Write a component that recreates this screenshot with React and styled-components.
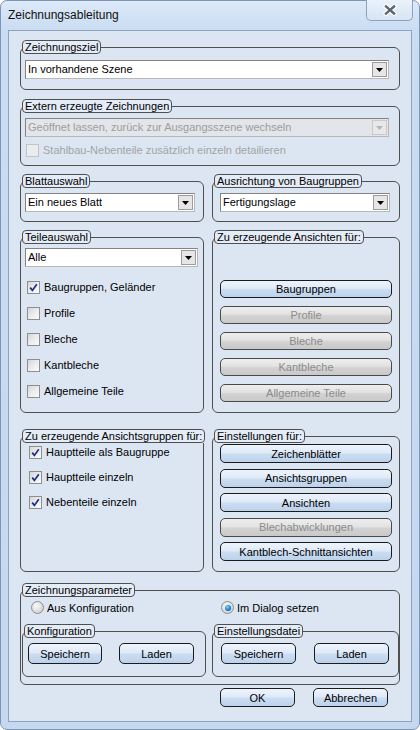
import React from 'react'
import styled, { createGlobalStyle } from 'styled-components'

const GlobalStyle = createGlobalStyle`
  html, body {
    margin: 0;
    padding: 0;
    background: #ffffff;
  }
  body {
    font-family: "Liberation Sans", Arial, sans-serif;
    font-size: 11px;
    color: #000;
  }
`

const Window = styled.div`
  box-sizing: border-box;
  width: 420px;
  height: 730px;
  display: flex;
  flex-direction: column;
  border: 1px solid #7d96b6;
  border-radius: 7px;
  background: linear-gradient(to bottom, #dce9f8 0px, #cadcf2 30px, #c5d8ef 100%);
  padding: 0 7px 7px 7px;
`

const TitleBar = styled.div`
  height: 29px;
  display: flex;
  justify-content: space-between;
  align-items: flex-start;
`

const Title = styled.div`
  font-size: 12px;
  line-height: 15px;
  padding-top: 7px;
  color: #101010;
`

const CloseButton = styled.div`
  box-sizing: border-box;
  width: 47px;
  height: 21px;
  margin-top: -1px;
  margin-right: -1px;
  display: flex;
  align-items: center;
  justify-content: center;
  border: 1px solid #8da3bf;
  border-top: none;
  border-radius: 0 0 5px 5px;
  background: linear-gradient(to bottom, #eaf2fb, #d7e4f4);
`

const Client = styled.div`
  flex: 1;
  box-sizing: border-box;
  border: 1px solid #8ea3bd;
  background: #dce6f3;
  padding: 9px 11px 0 11px;
  display: flex;
  flex-direction: column;
`

const Group = styled.fieldset`
  margin: ${p => p.$mt || 0}px 0 0 0;
  padding: 0;
  min-width: 0;
  border: 1px solid #4f4f4f;
  border-radius: 6px;
`

const Legend = styled.legend`
  margin-left: 1px;
  padding: 0 2px;
  border: 1px solid #4f4f4f;
  border-radius: 4px;
  background: #e4ecf7;
  font-size: 11px;
  line-height: 12px;
  white-space: nowrap;
`

const GroupBody = styled.div`
  display: flex;
  flex-direction: column;
  padding: ${p => p.$pad || '5px 8px 8px 4px'};
  gap: ${p => p.$gap || 0}px;
`

const Columns = styled.div`
  display: grid;
  grid-template-columns: 184px 188px;
  column-gap: 8px;
  margin-top: ${p => p.$mt || 0}px;
`

const SubColumns = styled.div`
  display: grid;
  grid-template-columns: 184px 1fr;
  column-gap: 6px;
  margin-top: 9px;
`

const SelectBox = styled.div`
  box-sizing: border-box;
  height: 19px;
  display: flex;
  border: 1px solid #838383;
  border-right-color: #b8b8b8;
  border-bottom-color: #b8b8b8;
  background: ${p => (p.$disabled ? '#e2e5e9' : '#ffffff')};
  color: ${p => (p.$disabled ? '#9d9d9d' : '#000')};
`

const SelectValue = styled.span`
  flex: 1;
  padding-left: 2px;
  line-height: 17px;
  white-space: nowrap;
  overflow: hidden;
`

const SelectArrow = styled.span`
  box-sizing: border-box;
  width: 15px;
  margin: 1px;
  display: flex;
  align-items: center;
  justify-content: center;
  border: 1px solid ${p => (p.$disabled ? '#c9c9c9' : '#9c9c9c')};
  background: ${p => (p.$disabled ? '#e8e8e8' : '#e6e6e6')};
`

const CheckRow = styled.label`
  display: flex;
  align-items: center;
  gap: 4px;
  height: 16px;
  padding-left: ${p => p.$indent || 0}px;
  color: ${p => (p.$disabled ? '#a3a3a3' : '#000')};
  white-space: nowrap;
`

const Box = styled.span`
  box-sizing: border-box;
  width: 13px;
  height: 13px;
  flex: none;
  display: flex;
  align-items: center;
  justify-content: center;
  border: 1px solid ${p => (p.$disabled ? '#c2c4c6' : '#8e8f8f')};
  background: ${p =>
    p.$disabled
      ? '#ebecee'
      : 'linear-gradient(135deg, #d6d6d6 0%, #ececec 50%, #fbfbfb 100%)'};
`

const CheckList = styled.div`
  display: flex;
  flex-direction: column;
  gap: ${p => p.$gap}px;
  margin-top: ${p => p.$mt || 0}px;
`

const Button = styled.div`
  box-sizing: border-box;
  height: ${p => p.$h || 19}px;
  width: ${p => (p.$w ? `${p.$w}px` : 'auto')};
  flex: none;
  display: flex;
  align-items: center;
  justify-content: center;
  border: 1px solid ${p => (p.$disabled ? '#4a4a4a' : '#1b1b1b')};
  border-radius: 5px;
  color: ${p => (p.$disabled ? '#8b8b8b' : '#000')};
  background: ${p =>
    p.$disabled
      ? 'linear-gradient(to bottom, #eeeeee 0%, #e2e2e2 45%, #d2d2d2 55%, #c9c9c9 100%)'
      : 'linear-gradient(to bottom, #eef4fc 0%, #dfeaf8 45%, #cadcf1 55%, #bcd2eb 100%)'};
  white-space: nowrap;
`

const ButtonStack = styled.div`
  display: flex;
  flex-direction: column;
  gap: ${p => p.$gap}px;
`

const ButtonRow = styled.div`
  display: flex;
  gap: ${p => p.$gap}px;
  padding-left: ${p => p.$indent || 0}px;
`

const RadioRow = styled.div`
  display: grid;
  grid-template-columns: 190px 1fr;
  padding-left: 9px;
`

const RadioLabel = styled.label`
  display: flex;
  align-items: center;
  gap: 3px;
  height: 15px;
  white-space: nowrap;
`

const RadioDot = styled.span`
  box-sizing: border-box;
  width: 13px;
  height: 13px;
  border-radius: 50%;
  flex: none;
  display: flex;
  align-items: center;
  justify-content: center;
  border: 1px solid #8d8f91;
  background: radial-gradient(circle at 40% 35%, #fbfbfb 0%, #dadada 60%, #c4c4c4 100%);

  &::after {
    content: '';
    display: ${p => (p.$checked ? 'block' : 'none')};
    width: 6px;
    height: 6px;
    border-radius: 50%;
    background: radial-gradient(circle at 40% 35%, #7fd8ff 0%, #1f7fd0 55%, #0d3f8a 100%);
  }
`

const Footer = styled.div`
  display: flex;
  justify-content: flex-end;
  gap: 18px;
  margin-top: 3px;
  padding-right: 12px;
`

const Arrow = ({ disabled }) => (
  <svg width="7" height="4" viewBox="0 0 7 4">
    <polygon points="0,0 7,0 3.5,4" fill={disabled ? '#b5b5b5' : '#000'} />
  </svg>
)

const Select = ({ value, disabled }) => (
  <SelectBox $disabled={disabled}>
    <SelectValue>{value}</SelectValue>
    <SelectArrow $disabled={disabled}>
      <Arrow disabled={disabled} />
    </SelectArrow>
  </SelectBox>
)

const Check = ({ label, checked, disabled, indent }) => (
  <CheckRow $disabled={disabled} $indent={indent}>
    <Box $disabled={disabled}>
      {checked && (
        <svg width="9" height="9" viewBox="0 0 9 9">
          <path d="M1.2 4.6 L3.4 7.4 L7.8 1.2" fill="none" stroke="#1d2b8c" strokeWidth="1.7" />
        </svg>
      )}
    </Box>
    {label}
  </CheckRow>
)

const Radio = ({ label, checked }) => (
  <RadioLabel>
    <RadioDot $checked={checked} />
    {label}
  </RadioLabel>
)

const Section = ({ title, pad, gap, mt, children }) => (
  <Group $mt={mt}>
    <Legend>{title}</Legend>
    <GroupBody $pad={pad} $gap={gap}>
      {children}
    </GroupBody>
  </Group>
)

const CloseGlyph = () => (
  <svg width="14" height="12" viewBox="0 0 14 12">
    <path d="M3 2.5 L11 9.5 M11 2.5 L3 9.5" stroke="#ffffff" strokeWidth="4.6" strokeLinecap="square" />
    <path d="M3 2.5 L11 9.5 M11 2.5 L3 9.5" stroke="#5e6670" strokeWidth="2.4" strokeLinecap="square" />
  </svg>
)

export default function App() {
  return (
    <>
      <GlobalStyle />
      <Window>
        <TitleBar>
          <Title>Zeichnungsableitung</Title>
          <CloseButton>
            <CloseGlyph />
          </CloseButton>
        </TitleBar>
        <Client>
          <Section title="Zeichnungsziel" pad="6px 10px 10px 4px">
            <Select value="In vorhandene Szene" />
          </Section>

          <Section title="Extern erzeugte Zeichnungen" mt={9} pad="5px 10px 7px 4px" gap={5}>
            <Select value="Geöffnet lassen, zurück zur Ausgangsszene wechseln" disabled />
            <Check label="Stahlbau-Nebenteile zusätzlich einzeln detailieren" disabled indent={1} />
          </Section>

          <Columns $mt={8}>
            <Section title="Blattauswahl" pad="5px 8px 9px 4px">
              <Select value="Ein neues Blatt" />
            </Section>
            <Section title="Ausrichtung von Baugruppen" pad="5px 9px 9px 7px">
              <Select value="Fertigungslage" />
            </Section>
          </Columns>

          <Columns $mt={8}>
            <Section title="Teileauswahl" pad="4px 5px 12px 4px">
              <Select value="Alle" />
              <CheckList $gap={10} $mt={12}>
                <Check label="Baugruppen, Geländer" checked indent={2} />
                <Check label="Profile" indent={2} />
                <Check label="Bleche" indent={2} />
                <Check label="Kantbleche" indent={2} />
                <Check label="Allgemeine Teile" indent={2} />
              </CheckList>
            </Section>
            <Section title="Zu erzeugende Ansichten für:" pad="36px 7px 10px 7px">
              <ButtonStack $gap={8}>
                <Button $h={18}>Baugruppen</Button>
                <Button $h={18} $disabled>Profile</Button>
                <Button $h={18} $disabled>Bleche</Button>
                <Button $h={18} $disabled>Kantbleche</Button>
                <Button $h={18} $disabled>Allgemeine Teile</Button>
              </ButtonStack>
            </Section>
          </Columns>

          <Columns $mt={16}>
            <Section title="Zu erzeugende Ansichtsgruppen für:" pad="1px 5px 10px 8px">
              <CheckList $gap={9}>
                <Check label="Hauptteile als Baugruppe" checked />
                <Check label="Hauptteile einzeln" checked />
                <Check label="Nebenteile einzeln" checked />
              </CheckList>
            </Section>
            <Section title="Einstellungen für:" pad="1px 7px 10px 7px">
              <ButtonStack $gap={5.5}>
                <Button>Zeichenblätter</Button>
                <Button>Ansichtsgruppen</Button>
                <Button>Ansichten</Button>
                <Button $disabled>Blechabwicklungen</Button>
                <Button>Kantblech-Schnittansichten</Button>
              </ButtonStack>
            </Section>
          </Columns>

          <Section title="Zeichnungsparameter" mt={11} pad="3px 0 7px 1px">
            <RadioRow>
              <Radio label="Aus Konfiguration" />
              <Radio label="Im Dialog setzen" checked />
            </RadioRow>
            <SubColumns>
              <Section title="Konfiguration" pad="5px 4px 12px 5px">
                <ButtonRow $gap={17}>
                  <Button $w={74} $h={21}>Speichern</Button>
                  <Button $w={75} $h={21}>Laden</Button>
                </ButtonRow>
              </Section>
              <Section title="Einstellungsdatei" pad="5px 4px 12px 8px">
                <ButtonRow $gap={18}>
                  <Button $w={75} $h={21}>Speichern</Button>
                  <Button $w={75} $h={21}>Laden</Button>
                </ButtonRow>
              </Section>
            </SubColumns>
          </Section>

          <Footer>
            <Button $w={75}>OK</Button>
            <Button $w={75}>Abbrechen</Button>
          </Footer>
        </Client>
      </Window>
    </>
  )
}
